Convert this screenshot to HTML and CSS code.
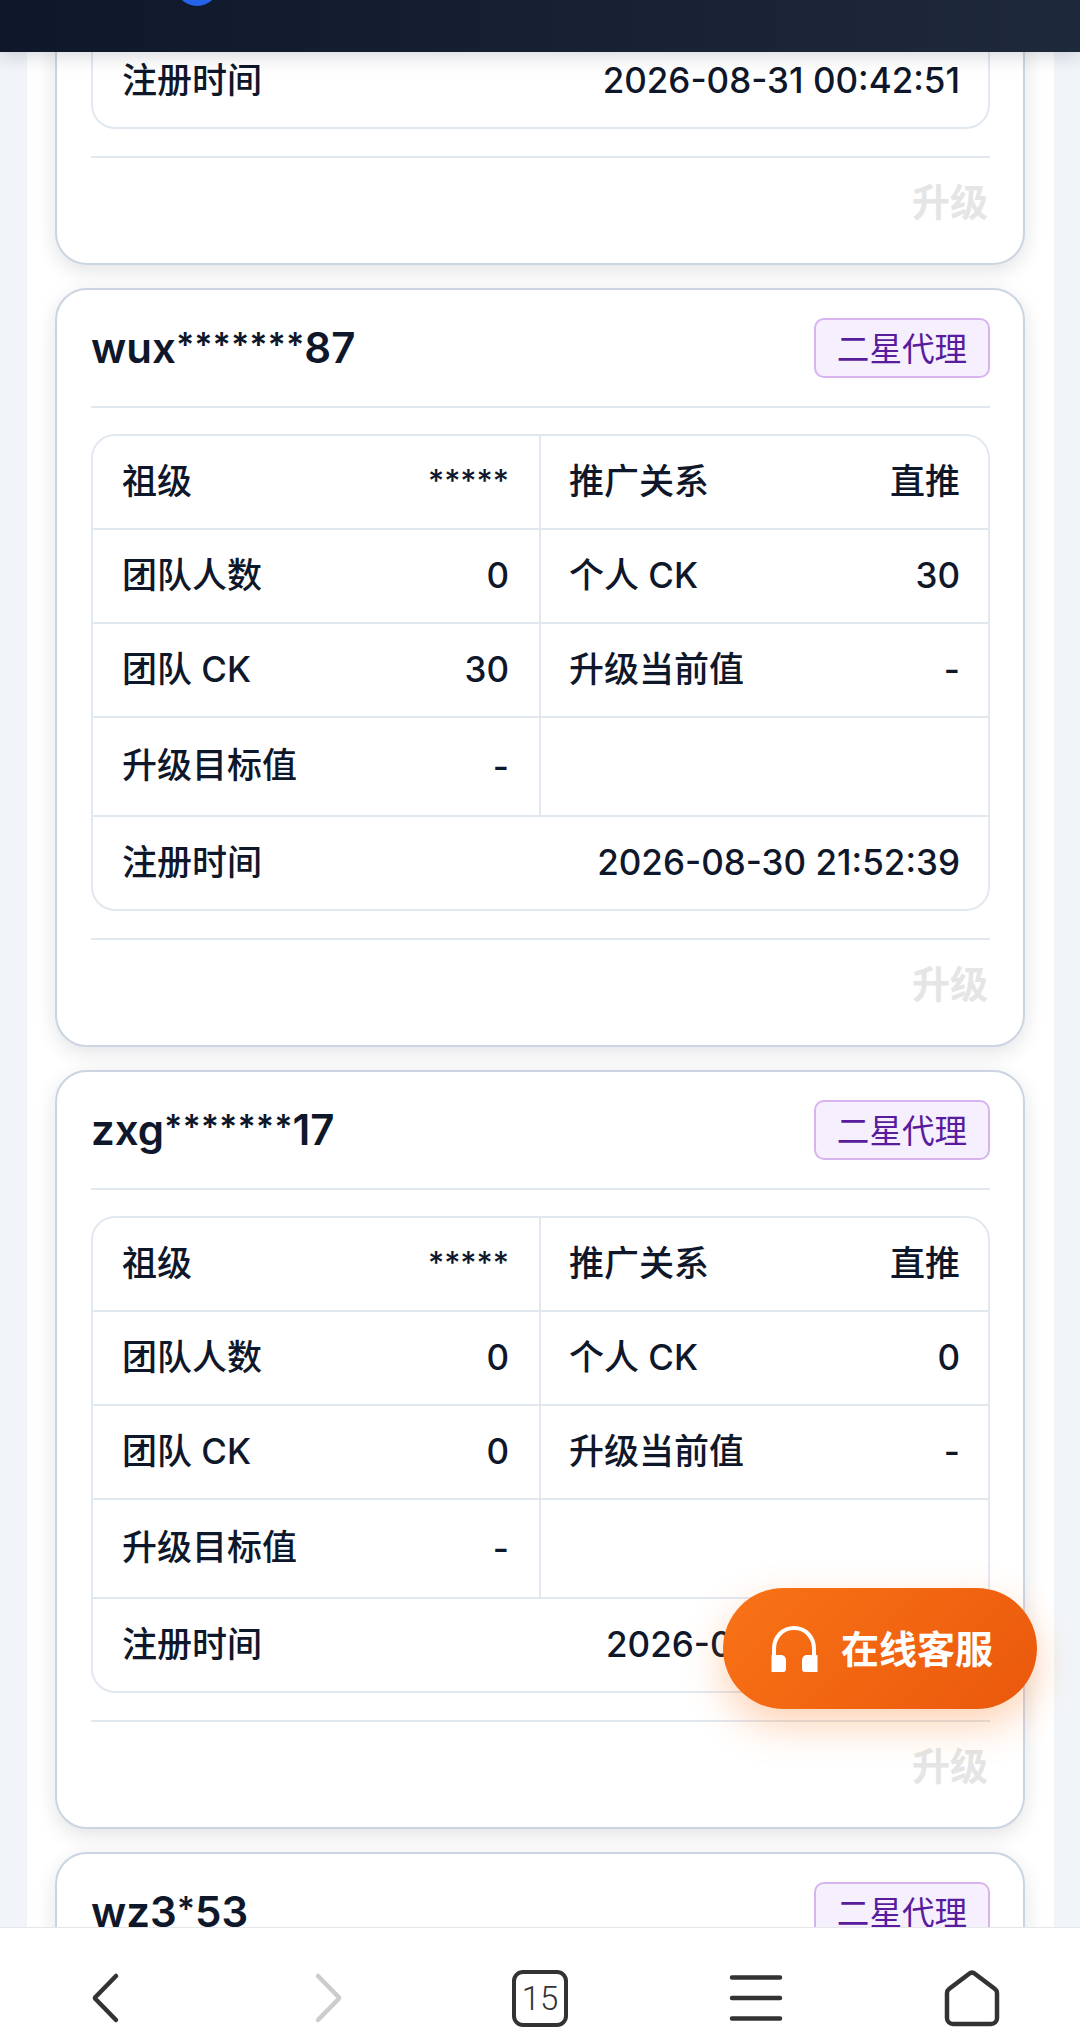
FILE: index.html
```html
<!DOCTYPE html>
<html lang="zh">
<head>
<meta charset="utf-8">
<title>团队列表</title>
<link rel="stylesheet" href="styles.css">
</head>
<body>
<div class="page">
  <header class="topbar"><span class="logo-dot"></span></header>
  <main class="scroll">
    <section class="card card-clipped">
      <div class="table table-clipped">
        <div class="row-wide"><span class="label">注册时间</span><span class="value">2026-08-31 00:42:51</span></div>
      </div>
      <div class="foot"><span class="upgrade">升级</span></div>
    </section>

    <section class="card">
      <div class="head"><span class="name">wux<span class="mask">*******</span>87</span><span class="badge">二星代理</span></div>
      <div class="table">
        <div class="grid">
          <div class="cell"><span class="label">祖级</span><span class="value"><span class="mask">*****</span></span></div>
          <div class="cell"><span class="label">推广关系</span><span class="value-cjk">直推</span></div>
          <div class="cell"><span class="label">团队人数</span><span class="value">0</span></div>
          <div class="cell"><span class="label">个人 CK</span><span class="value">30</span></div>
          <div class="cell"><span class="label">团队 CK</span><span class="value">30</span></div>
          <div class="cell"><span class="label">升级当前值</span><span class="value">-</span></div>
          <div class="cell cell-tall"><span class="label">升级目标值</span><span class="value">-</span></div>
          <div class="cell cell-tall"></div>
        </div>
        <div class="row-wide"><span class="label">注册时间</span><span class="value">2026-08-30 21:52:39</span></div>
      </div>
      <div class="foot"><span class="upgrade">升级</span></div>
    </section>

    <section class="card">
      <div class="head"><span class="name">zxg<span class="mask">*******</span>17</span><span class="badge">二星代理</span></div>
      <div class="table">
        <div class="grid">
          <div class="cell"><span class="label">祖级</span><span class="value"><span class="mask">*****</span></span></div>
          <div class="cell"><span class="label">推广关系</span><span class="value-cjk">直推</span></div>
          <div class="cell"><span class="label">团队人数</span><span class="value">0</span></div>
          <div class="cell"><span class="label">个人 CK</span><span class="value">0</span></div>
          <div class="cell"><span class="label">团队 CK</span><span class="value">0</span></div>
          <div class="cell"><span class="label">升级当前值</span><span class="value">-</span></div>
          <div class="cell cell-tall"><span class="label">升级目标值</span><span class="value">-</span></div>
          <div class="cell cell-tall"></div>
        </div>
        <div class="row-wide"><span class="label">注册时间</span><span class="value">2026-08-30 21:47:19</span></div>
      </div>
      <div class="foot"><span class="upgrade">升级</span></div>
    </section>

    <section class="card">
      <div class="head"><span class="name">wz3<span class="mask">*</span>53</span><span class="badge">二星代理</span></div>
    </section>
  </main>

  <button class="fab">
    <svg class="fab-icon" viewBox="0 0 48 48" aria-hidden="true">
      <path d="M4 33V24C4 12 12.500 3 24 3s20 9 20 21v9" fill="none" stroke="#fff" stroke-width="4"/>
      <path d="M1.500 30h9.500a5 5 0 0 1 5 5v9a3 3 0 0 1-3 3H1.500z" fill="#fff"/>
      <path d="M47.500 30H37a5 5 0 0 0-5 5v9a3 3 0 0 0 3 3h12.500z" fill="#fff"/>
    </svg>
    <span class="fab-text">在线客服</span>
  </button>

  <nav class="bar">
    <svg class="nav-icon nav-back" viewBox="0 0 60 60" aria-hidden="true">
      <path d="M34 8 L13.500 29 a1.500 1.500 0 0 0 0 2 L34 52" class="stroke"/>
    </svg>
    <svg class="nav-icon nav-forward" viewBox="0 0 60 60" aria-hidden="true">
      <path d="M18 8 L38.500 29 a1.500 1.500 0 0 1 0 2 L18 52" class="stroke stroke-off"/>
    </svg>
    <div class="tabs">15</div>
    <svg class="nav-icon" viewBox="0 0 60 60" aria-hidden="true">
      <path d="M6 9.500H54M6 30H54M6 50.500H54" class="stroke"/>
    </svg>
    <svg class="nav-icon" viewBox="0 0 60 60" aria-hidden="true">
      <path d="M30 4.500 a4 4 0 0 1 2.500 1 L53 21 a5 5 0 0 1 2 4 V50 a6 6 0 0 1-6 6 H11 a6 6 0 0 1-6-6 V25 a5 5 0 0 1 2-4 L27.500 5.500 a4 4 0 0 1 2.500-1z" class="stroke"/>
    </svg>
  </nav>
</div>
</body>
</html>
```
FILE: styles.css
```css
* { box-sizing: border-box; }
html, body { margin: 0; padding: 0; }
body {
  font-family: "Inter", "Noto Sans CJK SC", sans-serif;
  color: #0f172a;
}
.page {
  position: relative;
  width: 1080px;
  height: 2044px;
  overflow: hidden;
  display: flex;
  flex-direction: column;
  background: #f1f5f9;
}
.topbar {
  position: relative;
  z-index: 2;
  flex: 0 0 52px;
  overflow: hidden;
  padding-left: 175px;
  background: linear-gradient(90deg, #0f172a, #1e293b);
  box-shadow: 0 6px 16px rgba(15, 23, 42, .14);
}
.logo-dot {
  display: block;
  width: 44px;
  height: 44px;
  margin-top: -38px;
  border-radius: 50%;
  background: #2563eb;
}
.scroll {
  flex: 1;
  min-height: 0;
  overflow: hidden;
  margin: 0 26px 0 27px;
  padding: 0 29px 0 28px;
  background: #fff;
}
.card {
  margin-bottom: 23px;
  padding: 0 33px 0 34px;
  border: 2px solid #cbd5e1;
  border-radius: 32px;
  background: #fff;
  box-shadow: 0 6px 20px rgba(15, 23, 42, .12);
}
.card-clipped {
  margin-top: -17px;
  border-top: 0;
  border-radius: 0 0 32px 32px;
}
.head {
  display: flex;
  align-items: center;
  justify-content: space-between;
  height: 118px;
  border-bottom: 2px solid #e2e8f0;
}
.name {
  font-size: 42px;
  font-weight: 600;
  line-height: 1;
}
.name .mask {
  font-size: 34px;
  vertical-align: 6px;
}
.badge {
  width: 176px;
  height: 60px;
  display: flex;
  align-items: center;
  justify-content: center;
  padding-bottom: 4px;
  border: 2px solid #d8b4ee;
  border-radius: 10px;
  background: #f6effe;
  color: #581c9c;
  font-size: 32.600px;
}
.table {
  margin-top: 26px;
  border: 2px solid #e2e8f0;
  border-radius: 24px;
  overflow: hidden;
  font-size: 35px;
  font-weight: 500;
}
.table-clipped {
  margin-top: 0;
  border-top: 0;
  border-radius: 0 0 24px 24px;
}
.grid {
  display: grid;
  grid-template-columns: 448px 447px;
}
.cell {
  display: flex;
  align-items: center;
  justify-content: space-between;
  height: 94px;
  padding: 0 30px 0 29px;
  border-bottom: 2px solid #e2e8f0;
}
.cell:nth-child(odd) { border-right: 2px solid #e2e8f0; }
.cell:nth-child(even) { padding: 0 28px; }
.cell-tall { height: 99px; }
.row-wide {
  display: flex;
  align-items: center;
  justify-content: space-between;
  height: 92px;
  padding: 0 28px 0 29px;
}
.label, .value-cjk { margin-bottom: 8px; }
.value { margin-bottom: 2px; }
.value .mask {
  font-size: .890em;
  vertical-align: 2px;
}
.foot {
  display: flex;
  align-items: center;
  justify-content: flex-end;
  height: 107px;
  margin-top: 27px;
  padding: 0 2px 22px 0;
  border-top: 2px solid #e2e8f0;
}
.upgrade {
  font-size: 38px;
  font-weight: 600;
  color: #e5e5e5;
}
.fab {
  position: absolute;
  left: 723px;
  top: 1588px;
  z-index: 3;
  width: 314px;
  height: 121px;
  display: flex;
  align-items: center;
  justify-content: center;
  gap: 23px;
  padding: 0 0 0 3px;
  border: 0;
  border-radius: 61px;
  background: linear-gradient(135deg, #f97316, #ea580c);
  box-shadow: 0 16px 40px rgba(249, 115, 22, .32);
  color: #fff;
  font-family: inherit;
  font-size: 38px;
  font-weight: 700;
}
.fab-text { margin-bottom: 4px; }
.fab-icon { width: 48px; height: 48px; flex: none; }
.bar {
  position: relative;
  z-index: 2;
  flex: 0 0 117px;
  display: grid;
  grid-template-columns: repeat(5, 1fr);
  justify-items: center;
  align-items: center;
  padding-top: 24px;
  background: #fff;
  border-top: 1px solid #e5e7eb;
}
.nav-icon { width: 60px; height: 60px; }
.nav-back { margin-left: 8px; }
.nav-forward { margin-left: 12px; }
.stroke {
  fill: none;
  stroke: #333;
  stroke-width: 4.500;
  stroke-linecap: round;
  stroke-linejoin: round;
}
.stroke-off { stroke: #ccc; }
.tabs {
  width: 56px;
  height: 57px;
  display: flex;
  align-items: center;
  justify-content: center;
  border: 4px solid #333;
  border-radius: 11px;
  color: #333;
  font-family: "Roboto", sans-serif;
  font-size: 33px;
  font-weight: 300;
}
```
